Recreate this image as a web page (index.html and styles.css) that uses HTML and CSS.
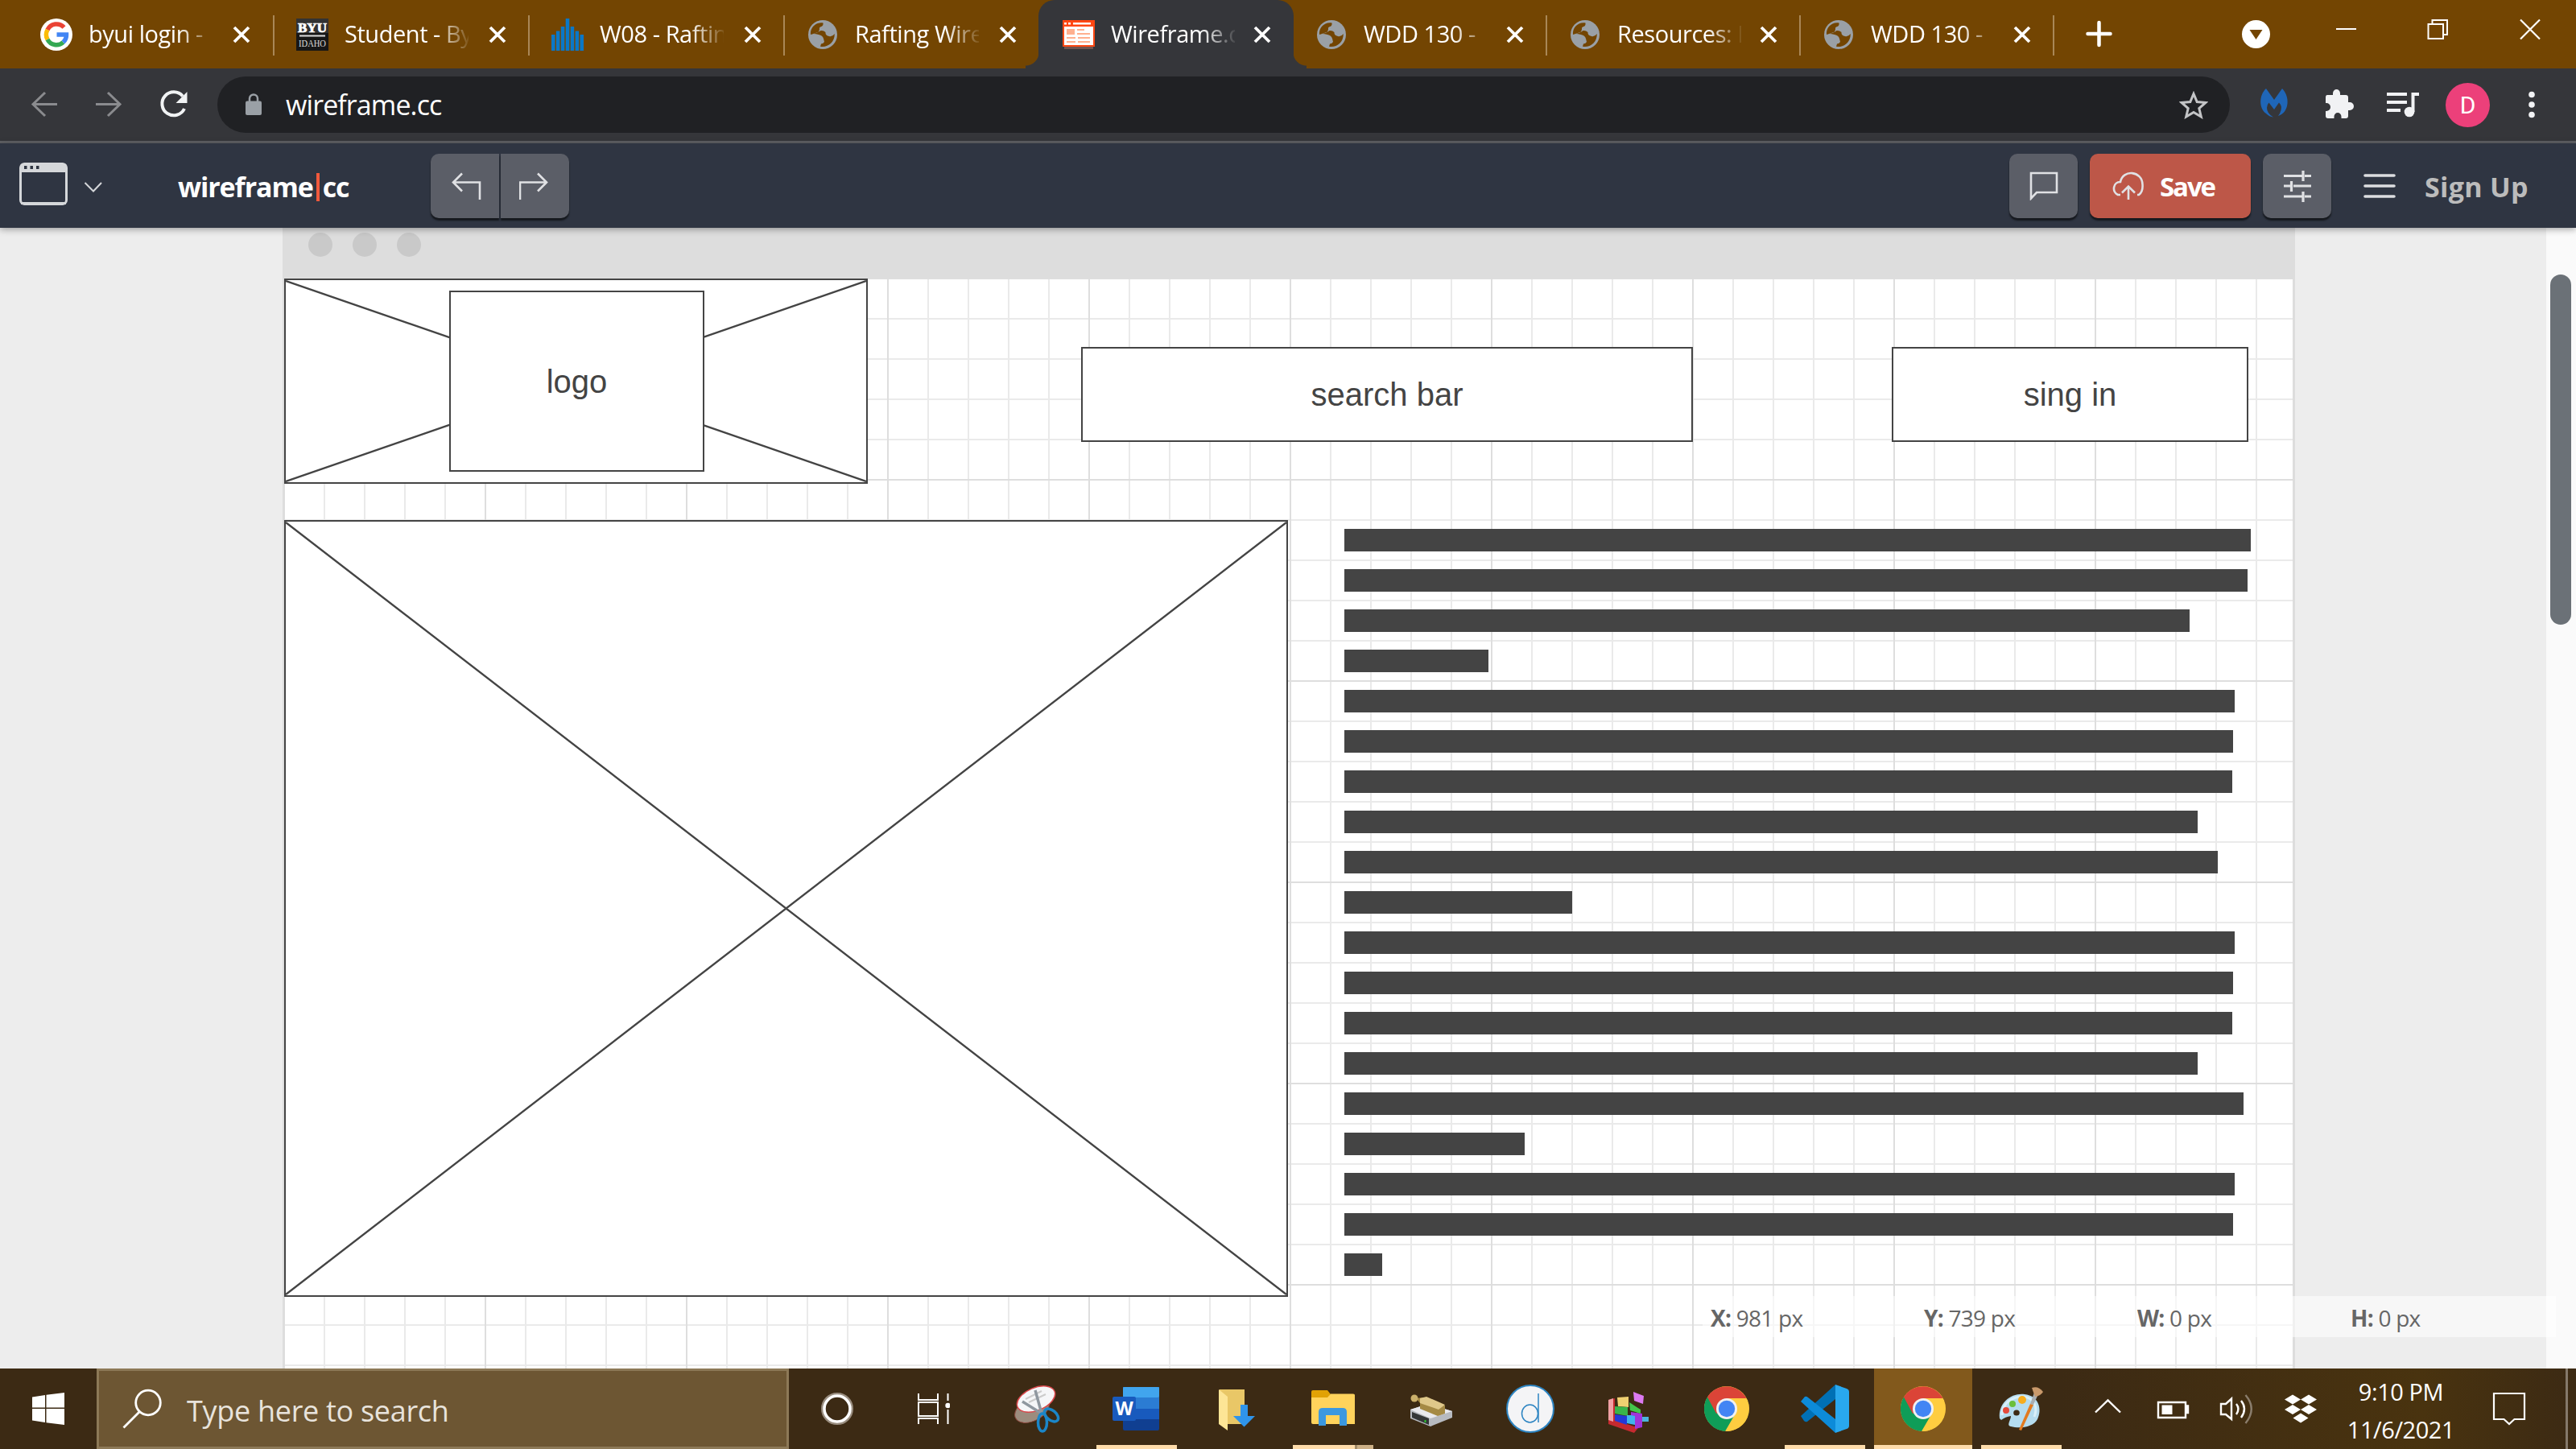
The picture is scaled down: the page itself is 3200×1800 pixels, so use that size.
FILE: index.html
```html
<!DOCTYPE html>
<html lang="en">
<head>
<meta charset="utf-8">
<title>Wireframe.cc</title>
<link rel="stylesheet" href="styles.css">
</head>
<body>
<svg class="sprite" aria-hidden="true">
  <symbol id="globe" viewBox="0 0 36 36">
    <circle cx="18" cy="18" r="18" fill="#9aa0a6"/>
    <path d="M18.500 3.500 C19 7 17 8 15 8.500 Q13.500 9 14 11.500 L13 14.500 Q10 15.500 6 17 L3 18 C2 10 9 2 18.500 3.500Z" fill="#734502"/>
    <path d="M3.500 17.500 Q7 16.500 13 18 Q18 19 19 23 L20 27 Q19 29 16 29.500 L15 32.800 C24 34.500 33 28 32.800 17 Q30 21 26 20 Q21 19 21.500 15 Q19 12.500 15.500 13 Q12 16 3.500 17.500Z" fill="#734502"/>
    <path d="M3 19 H13 Q17.500 19.500 17.500 24 L12.500 24.500 L12.500 31 Q4 28 3 19Z" fill="#9aa0a6"/>
  </symbol>
  <symbol id="x" viewBox="0 0 22 22"><path d="M2 2 L20 20 M20 2 L2 20" stroke="#fff" stroke-width="3.800" fill="none"/></symbol>
  <symbol id="chrome" viewBox="0 0 56 56">
    <circle cx="28" cy="28" r="28" fill="#ffcd40"/>
    <path d="M28 28 L4 13.500 A28 28 0 0 0 26 56 L40 32Z" fill="#0f9d58"/>
    <path d="M28 28 L15 34 L4 13.500 A28 28 0 0 1 52.500 15 L28 15Z" fill="#db4437"/>
    <path d="M28 15.500 H52.500 A28 28 0 0 1 27 56 L39 34Z" fill="#ffcd40"/>
    <circle cx="28" cy="28" r="13" fill="#f1f1f1"/><circle cx="28" cy="28" r="10.200" fill="#4285f4"/>
  </symbol>
</svg>

<header class="tabs">
  <div class="tab">
    <svg class="fav" viewBox="0 0 40 40"><circle cx="20" cy="20" r="20" fill="#fff"/><g fill="none" stroke-width="5.500"><path d="M29.500 11 A12.500 12.500 0 0 0 9 14" stroke="#ea4335"/><path d="M9 14 A12.500 12.500 0 0 0 9 26" stroke="#fbbc05"/><path d="M9 26 A12.500 12.500 0 0 0 28.500 29.500" stroke="#34a853"/><path d="M28.500 29.500 A12.500 12.500 0 0 0 32.500 20 H20.500" stroke="#4285f4"/></g></svg>
    <span class="title">byui login -</span><svg class="close"><use href="#x"/></svg>
  </div>
  <div class="tab">
    <svg class="fav" viewBox="0 0 40 40"><rect width="40" height="40" fill="#171717"/><rect width="40" height="18" fill="#333"/><text x="2" y="17" class="byu" textLength="36" lengthAdjust="spacingAndGlyphs">BYU</text><rect x="4" y="20.500" width="32" height="2" fill="#ddd"/><text x="3" y="35" class="idaho" textLength="34" lengthAdjust="spacingAndGlyphs">IDAHO</text></svg>
    <span class="title">Student - By</span><svg class="close"><use href="#x"/></svg>
  </div>
  <div class="tab">
    <svg class="fav" viewBox="0 0 40 40" fill="#0a78c8"><path d="M0 20h4.500v20H0zM5.900 15.500h4.500V40H5.900zM11.800 10h4.500v30h-4.500zM17.700 0h4.600v40h-4.600zM23.700 10h4.500v30h-4.500zM29.600 15.500h4.500V40h-4.500zM35.500 20H40v20h-4.500z"/></svg>
    <span class="title">W08 - Raftin</span><svg class="close"><use href="#x"/></svg>
  </div>
  <div class="tab"><svg class="fav world"><use href="#globe"/></svg><span class="title">Rafting Wire</span><svg class="close"><use href="#x"/></svg></div>
  <div class="tab active">
    <svg class="fav" viewBox="0 0 40 40"><rect x="2" y="34" width="36" height="4" fill="#70544f"/><rect y="2" width="40" height="33" fill="#ff4713"/><rect x="2" y="10" width="36" height="23" fill="#fff"/><path d="M2 5h3v2.500H2zM7 5h3v2.500H7zM13 5h22v2.500H13z" fill="#fff"/><path d="M5 13h10v7H5zM18 13h9v2H18zM18 18h16v2H18zM5 23h11v2H5zM19 23h15v2H19zM5 28h11v2H5zM19 28h15v2H19z" fill="#ffb08f"/></svg>
    <span class="title">Wireframe.c</span><svg class="close"><use href="#x"/></svg>
  </div>
  <div class="tab"><svg class="fav world"><use href="#globe"/></svg><span class="title">WDD 130 -</span><svg class="close"><use href="#x"/></svg></div>
  <div class="tab"><svg class="fav world"><use href="#globe"/></svg><span class="title">Resources: D</span><svg class="close"><use href="#x"/></svg></div>
  <div class="tab"><svg class="fav world"><use href="#globe"/></svg><span class="title">WDD 130 -</span><svg class="close"><use href="#x"/></svg></div>
  <svg class="winctl" viewBox="0 0 648 84" fill="none" stroke="#fff">
    <path d="M41.500 42 H69.500 M55.500 28 V56" stroke-width="4.500" stroke-linecap="round"/>
    <circle cx="250.500" cy="42.500" r="17.500" fill="#fff" stroke="none"/><path d="M242.500 37 H258.500 L250.500 49Z" fill="#734502" stroke="none"/>
    <path d="M350 36 H375" stroke-width="2"/>
    <path d="M464.500 30 H483 V48 H464.500Z M469.500 30 V25 H488 V43 H483" stroke-width="2"/>
    <path d="M579 24.500 L603 48.500 M603 24.500 L579 48.500" stroke-width="2.200"/>
  </svg>
</header>

<nav class="toolbar">
  <svg class="navicons" viewBox="0 0 270 90" fill="none" stroke="#8a8b8e" stroke-width="3">
    <path d="M71 44.500 H41 M56 30 L41 44.500 L56 59"/>
    <path d="M119 44.500 H149 M134 30 L149 44.500 L134 59"/>
    <path d="M229 50 A14.500 14.500 0 1 1 227 34.500" stroke="#f1f3f4" stroke-width="4"/><path d="M232.500 29 V43 H218.500Z" fill="#f1f3f4" stroke="none"/>
  </svg>
  <div class="omnibox">
    <svg class="lock" viewBox="0 0 20 28"><rect y="9.500" width="20" height="17.500" rx="2" fill="#9aa0a6"/><path d="M5 11 V6.500 A5 5 0 0 1 15 6.500 V11" fill="none" stroke="#9aa0a6" stroke-width="2.500"/></svg>
    <span class="url">wireframe.cc</span>
    <svg class="star" viewBox="0 0 36 35"><path d="M18 3.500 L22.200 13.500 L33 14.400 L24.800 21.500 L27.300 32 L18 26.400 L8.700 32 L11.200 21.500 L3 14.400 L13.800 13.500Z" fill="none" stroke="#c3c4c6" stroke-width="3"/></svg>
  </div>
  <svg class="ext" viewBox="0 0 430 90">
    <path d="M45 25 C36 33 36 50 45 56 Q49 60 54 60.500 Q46 56 46 49 Q46 45 48.500 42.500 L55 51 L61 42.500 Q65 46 63.500 52 Q62.500 56 60 59 C74 55 75 35 65 25 L55 39Z" fill="#1f66b8"/>
    <path d="M121 33 H128 V31 A4.500 5 0 0 1 137 31 V33 H144 Q147 33 147 36 V42 H149 A5 5 0 0 1 149 52 H147 V59 Q147 62 144 62 H138.500 V60 A4.500 5 0 0 0 129.500 60 V62 H122 Q119 62 119 59 V53 H120 A5 5 0 0 0 120 43 H119 V36 Q119 33 121 33Z" fill="#f1f2f4"/>
    <path d="M195 32 H220 M195 42 H220 M195 52 H212" stroke="#f1f2f4" stroke-width="4"/><path d="M227.500 54 V32 H235" stroke="#f1f2f4" stroke-width="4" fill="none"/><circle cx="223" cy="54" r="6.300" fill="#f1f2f4"/>
    <circle cx="295.500" cy="45.500" r="27.500" fill="#ec407a"/><text x="295.500" y="56" class="avatar">D</text>
    <g fill="#f1f2f4"><circle cx="375" cy="32.500" r="3.800"/><circle cx="375" cy="45" r="3.800"/><circle cx="375" cy="57.500" r="3.800"/></g>
  </svg>
</nav>

<div class="appbar">
  <svg class="windowicon" viewBox="0 0 104 56"><rect x="1.500" y="1.500" width="57" height="50" rx="5" fill="none" stroke="#d5d7da" stroke-width="3"/><path d="M1 12 V5 Q1 1 5 1 H55 Q59 1 59 5 V12Z" fill="#d5d7da"/><path d="M2 50.500H58" stroke="#d5d7da" stroke-width="3"/><path d="M6 4h3.500v4H6zM13.500 4H17v4h-3.500zM21 4h3.500v4H21z" fill="#2f3542"/><path d="M81.500 25 L92 35.500 L102 25" fill="none" stroke="#d5d7da" stroke-width="2"/></svg>
  <div class="brand">wireframe<i></i>cc</div>
  <div class="history">
    <div class="btn"><svg viewBox="0 0 40 34"><path d="M38 34 V12.500 H6 M16 1.500 L5 12.500 L16 23.500" class="line"/></svg></div>
    <div class="btn"><svg viewBox="0 0 40 34"><path d="M1 34 V12.500 H33 M23 1.500 L34 12.500 L23 23.500" class="line"/></svg></div>
  </div>
  <div class="btn comment"><svg viewBox="0 0 36 36"><path d="M2 2 H34 V26 H9 L2 33.500Z" class="line"/></svg></div>
  <div class="btn save"><svg viewBox="0 0 40 36"><path d="M10 29 H7 C-1 25 1 13 10 13 C13 -3 37 -1 37.500 16 C38 22 37 26 33 29 H31 M20 35 V19 M12 26.500 L20 18.500 L28 26.500" class="line"/></svg><span>Save</span></div>
  <div class="btn tune"><svg viewBox="0 0 36 40"><path d="M1 7.500 H25 M27 7.500 H35 M25 1 V14 M1 20 H9 M13 20 H35 M10.500 14 V27 M1 33 H25 M27 33 H35 M25 27 V40" class="line thick"/></svg></div>
  <svg class="menu" viewBox="0 0 40 36"><path d="M2 5 H38 M2 18 H38 M2 31 H38" stroke="#dcdde0" stroke-width="3.600" stroke-linecap="round"/></svg>
  <span class="signup">Sign Up</span>
</div>

<main class="workspace">
  <div class="frame">
    <div class="framebar"><b></b><b></b><b></b></div>
    <div class="page">
      <div class="top">
        <div class="box image logo"><svg viewBox="0 0 721 251" preserveAspectRatio="none"><path d="M0 1 L721 250 M721 1 L0 250"/></svg><div class="box label">logo</div></div>
        <div class="box search">search bar</div>
        <div class="box signin">sing in</div>
      </div>
      <div class="content">
        <div class="box image hero"><svg viewBox="0 0 1243 961" preserveAspectRatio="none"><path d="M0 1 L1243 960 M1243 1 L0 960"/></svg></div>
        <div class="copy">
          <p style="width:1126px"></p><p style="width:1122px"></p><p style="width:1050px"></p><p style="width:179px"></p>
          <p style="width:1106px"></p><p style="width:1104px"></p><p style="width:1103px"></p><p style="width:1060px"></p><p style="width:1085px"></p><p style="width:283px"></p>
          <p style="width:1106px"></p><p style="width:1104px"></p><p style="width:1103px"></p><p style="width:1060px"></p><p style="width:1117px"></p><p style="width:224px"></p>
          <p style="width:1106px"></p><p style="width:1104px"></p><p style="width:47px"></p>
        </div>
      </div>
    </div>
  </div>
  <div class="scroll"><div class="thumb"></div></div>
  <div class="status"><span><b>X:</b> 981 px</span><span><b>Y:</b> 739 px</span><span><b>W:</b> 0 px</span><span><b>H:</b> 0 px</span></div>
</main>

<footer class="taskbar">
  <div class="start"><svg viewBox="0 0 40 40" fill="#fff"><path d="M0 5.500 L16 3 V18.500 H0ZM17.500 2.800 L40 0 V18.500 H17.500ZM0 20 H16 V37 L0 34.500ZM17.500 20 H40 V40 L17.500 37.200Z"/></svg></div>
  <div class="find"><svg viewBox="0 0 50 50" fill="none" stroke="#fff" stroke-width="2.800"><circle cx="32" cy="17.500" r="15.300"/><path d="M21.500 28.500 L1.500 48.500"/></svg><span>Type here to search</span></div>
  <div class="sys"><svg viewBox="0 0 40 40"><circle cx="20" cy="20" r="18" fill="none" stroke="#9a8e80" stroke-width="4"/><circle cx="20" cy="20" r="16" fill="none" stroke="#fff" stroke-width="3.500"/></svg></div>
  <div class="sys"><svg viewBox="0 0 40 40" fill="none" stroke="#fff" stroke-width="2"><path d="M1 1 V9 H25 V1 M1 12 H25 V29 H1Z M1 39 V32 H25 V39 M37.500 1 V10 M37.500 21 V39"/><circle cx="37.500" cy="16" r="3.200" fill="#fff" stroke="none"/></svg></div>
  <div class="apps">
    <div class="app"><svg viewBox="0 0 60 60"><ellipse cx="22" cy="31" rx="23" ry="14" transform="rotate(-28 22 31)" fill="#9c8c7e" stroke="#8e4a40" stroke-width="1"/><ellipse cx="27" cy="18" rx="25" ry="14" transform="rotate(-23 27 18)" fill="#f5f6f8" stroke="#d8474a" stroke-width="1.500"/><path d="M14 18 L34 8 M18 22 L39 12" stroke="#ccc" stroke-width="2"/><path d="M10 21 L34 36 M26 7 L34 36" stroke="#8f979f" stroke-width="3.500"/><g fill="none" stroke="#1b86c8" stroke-width="3.500"><ellipse cx="35" cy="47" rx="5.500" ry="11"/><ellipse cx="46" cy="38" rx="6" ry="10" transform="rotate(-50 46 38)"/></g></svg></div>
    <div class="app run"><svg viewBox="1 0 60 60"><rect x="14" y="3" width="45" height="54" rx="2" fill="#103f91"/><rect x="14" y="3" width="45" height="40" fill="#185abd"/><rect x="14" y="3" width="45" height="27" fill="#2b7cd3"/><rect x="14" y="3" width="45" height="13" rx="2" fill="#41a5ee"/><rect x="1" y="15" width="29" height="30" rx="2" fill="#185abd"/><text x="15.500" y="38" class="word">W</text></svg></div>
    <div class="app"><svg viewBox="0 0 60 60"><path d="M11 6 H42 V49 H11Z" fill="#e9c767"/><path d="M10 6 L21 15 V57 L10 49Z" fill="#fde596"/><path d="M37 25 H46 V39 H55 L41.500 52.500 L28 39 H37Z" fill="#2f94ea"/></svg></div>
    <div class="app run group"><svg viewBox="0 0 60 60"><path d="M3 9 Q3 7 5 7 H23 L27 12 L23 17 H3Z" fill="#e1a205"/><path d="M3 16 H23 L27 11.500 H55 Q57 11.500 57 13 V49 H5 Q3 49 3 47Z" fill="#ffd35c"/><path d="M12 51 V34 Q12 29 17 29 H42 Q47 29 47 34 V51 H38 V38 H21 V51Z" fill="#3b98e0"/></svg></div>
    <div class="app"><svg viewBox="0 0 60 60"><path d="M4 31 L26 24 L56 33 V41 L29 52 L4 42Z" fill="#b7bac0"/><path d="M4 31 L26 24 L56 33 L29 42Z" fill="#e9e9ee"/><path d="M6 34 L27 42 V50 L6 41Z" fill="#343638"/><path d="M11 17 L20 16 L47 26 V36 L38 39 L16 30 V23Z" fill="#a58a45"/><path d="M16 17 L24 15 L47 25 L39 31 L16 23Z" fill="#dfc88a"/><circle cx="9" cy="17" r="4.500" fill="#cbb06b"/><path d="M22.500 44v3" stroke="#2dc52d" stroke-width="2"/></svg></div>
    <div class="app"><svg viewBox="0 0 60 60"><circle cx="30" cy="30" r="29" fill="#f4f4f6" stroke="#2c84c2" stroke-width="2"/><g fill="none" stroke="#2c84c2" stroke-width="1.500"><ellipse cx="29.500" cy="36" rx="10" ry="11"/><path d="M40 11 V47"/></g></svg></div>
    <div class="app"><svg viewBox="-1 0 60 60"><path d="M4 19 L12 17 V44 L36 52 L44 50 L36 60 L4 49Z" fill="#c62a30"/><path d="M4 19 L10 17 V46 L4 44Z" fill="#f0a0a4"/><path d="M15 16 L29 15 V28 L16 27Z" fill="#efd071"/><path d="M12 27 L28 28 V39 L12 36Z" fill="#39b44a"/><path d="M12 37 L27 39 V50 L12 45Z" fill="#2438d8"/><path d="M27 38 H37 V50 L27 48Z" fill="#3fb3ee"/><path d="M32 34 L46 36 V53 L37 55 V39 L32 38Z" fill="#a034d8"/><path d="M30 22 L44 31 V36 L31 32Z" fill="#43c64b"/><path d="M35 9 L48 14 L47 24 L36 20Z" fill="#dc7af2"/><rect x="46" y="40" width="8" height="6" fill="#4bb4dc"/></svg></div>
    <div class="app"><svg class="chr"><use href="#chrome"/></svg></div>
    <div class="app run"><svg viewBox="0 0 60 60"><path d="M0 39 L43 0 V18 L8 46 Q6 47 4 45Z" fill="#0070b5"/><path d="M0 21 L5 15 Q7 14 9 16 L43 43 V60Z" fill="#0d8bd9"/><path d="M43 0 L57 5 Q60 6 60 9 V51 Q60 54 57 55 L43 60Z" fill="#29a8ee"/></svg></div>
    <div class="app run current"><svg class="chr"><use href="#chrome"/></svg></div>
    <div class="app run"><svg viewBox="0 0 60 60"><path d="M3 42 C1 22 18 10 34 12 C52 14 56 31 50 43 C45 53 28 55 17 52 C11 51 17 44 17 39 Q10 40 5 44Z" fill="#b5dcef"/><path d="M6 38 C6 24 18 14 33 15 C48 17 50 30 46 40" fill="none" stroke="#d9eff9" stroke-width="3"/><ellipse cx="24" cy="35" rx="3.800" ry="3.500" fill="#3c2a14"/><circle cx="11" cy="32" r="4" fill="#e44a3b"/><circle cx="19" cy="24" r="4" fill="#6bbf3b"/><circle cx="31" cy="19" r="5" fill="#f7ad1d"/><path d="M41 24 L45 25 L30 57 L27 56Z" fill="#e27a1f"/><path d="M41 24 L46 10 L51 12 L45 25Z" fill="#a9aeb2"/><path d="M43 4 Q51 1 57 9 Q54 14 47 15Z" fill="#c9996b"/></svg></div>
  </div>
  <svg class="tray" viewBox="0 0 340 100" fill="none" stroke="#fff" stroke-width="2.400">
    <path d="M34 54.500 L49.500 39.500 L65 54.500"/>
    <path d="M112 42 H146 V61 H112Z M147 46.500 H149 V55 H147Z" /><rect x="116.500" y="45.500" width="13" height="11.500" fill="#fff" stroke="none"/>
    <path d="M190 44 H196 L203 37.500 V63 L196 57 H190Z"/><path d="M209 44 Q214 50 209 57 M215 40 Q223 50 215 61"/><path d="M220.500 33 Q235 50 220.500 68" stroke="#8a7d6c"/>
    <path d="M279 32.500 L289 38.500 L279 44.500 L269 38.500ZM299 32.500 L309 38.500 L299 44.500 L289 38.500ZM279 45 L289 51 L279 57 L269 51ZM299 45 L309 51 L299 57 L289 51ZM289 55.500 L298.500 61.500 L289 67.500 L279.500 61.500Z" fill="#fff" stroke="none"/>
  </svg>
  <div class="clock"><span>9:10 PM</span><span>11/6/2021</span></div>
  <svg class="note" viewBox="0 0 130 100"><path d="M28 31 H66 V63 H53.500 L47 69 L40.500 63 H28Z" fill="none" stroke="#fff" stroke-width="2.200"/><rect x="117" width="3" height="100" fill="#85796a"/></svg>
</footer>
</body>
</html>
```
FILE: styles.css
```css
* { box-sizing: border-box; }
body { margin: 0; width: 3200px; height: 1800px; overflow: hidden; display: flex; flex-direction: column; background: #ededed; font-family: "Open Sans", "Noto Sans", sans-serif; }
svg { display: block; flex: none; }
.sprite { position: absolute; width: 0; height: 0; }

/* Tab strip */
.tabs { flex: none; height: 85px; background: #734502; display: grid; grid-template-columns: 317px 317px 317px 317px 315px 315px 315px 315px 648px; padding-left: 24px; }
.tab { position: relative; display: flex; align-items: center; padding-left: 27px; }
.tab:first-child { padding-left: 26px; }
.tab::after { content: ""; position: absolute; right: 0; top: 19px; width: 2px; height: 50px; background: #a98757; }
.tab:nth-child(4)::after, .tab.active::after { display: none; }
.fav { width: 40px; height: 40px; }
.world { width: 36px; height: 36px; margin: 0 2px 0 2px; }
.title { width: 154px; margin-left: 20px; font-size: 29px; line-height: 44px; letter-spacing: -.45px; color: #fff; white-space: nowrap; overflow: hidden; padding-bottom: 1px; -webkit-mask-image: linear-gradient(90deg, #000 112px, transparent 158px); mask-image: linear-gradient(90deg, #000 112px, transparent 158px); }
.close { width: 22px; height: 22px; margin-left: 25px; }
.tab:nth-child(n+5) .close { margin-left: 23px; }
.tab.active { background: #35363a; border-radius: 20px 20px 0 0; margin-left: -2px; padding-left: 30px; }
.tab.active::before { content: ""; position: absolute; left: -16px; right: -16px; bottom: 0; height: 20px; background: radial-gradient(circle at 0 0, transparent 16px, #35363a 17px) 0 0 / 16px 20px no-repeat, radial-gradient(circle at 100% 0, transparent 16px, #35363a 17px) 100% 0 / 16px 20px no-repeat; }
.byu { font: bold 16px "Liberation Serif", serif; fill: #fff; stroke: #fff; stroke-width: .7px; }
.idaho { font: 12px "Liberation Serif", serif; fill: #ddd; }
.winctl { width: 648px; height: 84px; }

/* Address bar */
.toolbar { flex: none; height: 93px; background: #35363a; border-bottom: 3px solid #5f6064; display: flex; }
.navicons { width: 270px; height: 90px; }
.omnibox { width: 2500px; height: 70px; margin-top: 10px; border-radius: 35px; background: #202124; display: flex; align-items: center; padding: 0 27px 0 35px; }
.lock { width: 20px; height: 28px; }
.url { flex: 1; margin-left: 30px; font-size: 34px; line-height: 50px; letter-spacing: -0.9px; color: #fff; }
.star { width: 36px; height: 35px; }
.ext { width: 430px; height: 90px; }
.avatar { font: 30px Roboto, sans-serif; fill: #fff; text-anchor: middle; }

/* Application bar */
.appbar { flex: none; position: relative; z-index: 2; height: 105px; background: #2f3542; box-shadow: 0 2px 8px rgba(0,0,0,.35); display: flex; align-items: flex-start; padding: 13px 0 0 24px; }
.windowicon { width: 104px; height: 56px; margin-top: 11px; }
.brand { width: 314px; margin-left: 93px; height: 80px; display: flex; align-items: center; padding-top: 1px; font-weight: 700; font-size: 34px; letter-spacing: -1.1px; color: #fff; }
.brand i { width: 4px; height: 35px; margin: 2px 4px 0 4px; background: #f2593c; }
.history { display: flex; gap: 2px; width: 1961px; }
.btn { height: 80px; width: 85px; border-radius: 10px; background: #5b5e67; box-shadow: 0 3px 2px #15181d; display: flex; align-items: center; justify-content: center; }
.history .btn:first-child { border-radius: 10px 0 0 10px; }
.history .btn:last-child { border-radius: 0 10px 10px 0; }
.btn svg { width: 36px; height: 36px; }
.history svg { width: 40px; height: 34px; }
.line { fill: none; stroke: #e0e1e4; stroke-width: 2.6; }
.thick { stroke-width: 3.2; }
.save { width: 200px; margin: 0 15px; background: #bd5748; justify-content: flex-start; padding-left: 28px; color: #fff; font-weight: 700; font-size: 33px; letter-spacing: -2.1px; }
.btn.save svg { width: 40px; }
.save span { margin-left: 19px; }
.btn.tune svg { height: 40px; }
.menu { width: 40px; height: 36px; margin: 22px 0 0 40px; }
.signup { margin-left: 36px; line-height: 83px; font-weight: 700; font-size: 34px; letter-spacing: .3px; color: #bcbcbc; }

/* Workspace */
.workspace { flex: none; position: relative; height: 1417px; overflow: hidden; display: flex; justify-content: space-between; padding-left: 351px; }
.frame { width: 2500px; background: #ddd; border-left: 2px solid #ddd; border-right: 3px solid #ddd; }
.framebar { height: 63px; display: flex; gap: 25px; padding: 6px 0 0 30px; }
.framebar b { width: 30px; height: 30px; border-radius: 50%; background: #c9c9c9; }
.page { height: 1354px; background-color: #fff;
  background-image: linear-gradient(90deg, transparent 248px, #dedede 248px), linear-gradient(transparent 248px, #dedede 248px), linear-gradient(90deg, transparent 48px, #eaeaea 48px), linear-gradient(transparent 48px, #eaeaea 48px);
  background-size: 250px 250px, 250px 250px, 50px 50px, 50px 50px;
  background-position: 1px 1px; }
.box { border: 2px solid #444; background: #fff; display: flex; align-items: center; justify-content: center; font: 40px "Liberation Sans", Arial, sans-serif; color: #444; }
.top { display: flex; align-items: center; height: 255px; }
.image { display: grid; }
.image > * { grid-area: 1 / 1; }
.image svg { width: 100%; height: 100%; fill: none; stroke: #444; stroke-width: 2.4; }
.logo { width: 725px; height: 255px; }
.label { width: 317px; height: 225px; place-self: center; margin-left: 2px; padding-top: 2px; }
.search { width: 760px; height: 118px; margin: 33px 0 0 265px; }
.signin { width: 443px; height: 118px; margin: 33px 0 0 247px; }
.content { display: flex; margin-top: 45px; }
.hero { width: 1247px; height: 965px; }
.copy { padding: 11px 0 0 70px; display: flex; flex-direction: column; gap: 22px; }
.copy p { margin: 0; height: 28px; background: #444; }
.scroll { width: 37px; background: #fafafa; padding: 58px 6px 0 5px; }
.thumb { height: 435px; border-radius: 13px; background: #6b7177; }
.status { position: absolute; left: 2115px; top: 1327px; width: 1060px; height: 51px; padding-left: 10px; background: rgba(255,255,255,.55); display: grid; grid-template-columns: repeat(4, 265px); font-size: 28px; line-height: 54px; letter-spacing: -.75px; color: #666; }

/* Taskbar */
.taskbar { flex: none; height: 100px; background: linear-gradient(90deg, #3c2a14 80%, #49330f 94%, #3c2a14); display: flex; }
.start { width: 120px; padding: 30px 40px; }
.start svg { width: 40px; height: 40px; }
.find { width: 860px; background: #6d5633; border: 3px solid #8d7957; display: flex; align-items: center; padding: 0 0 1px 29px; font-size: 36px; letter-spacing: -.3px; color: #e8e3dc; }
.find svg { width: 50px; height: 50px; }
.find span { margin-left: 30px; padding-top: 5px; }
.sys { width: 120px; display: flex; align-items: center; justify-content: center; }
.sys svg { width: 40px; height: 40px; }
.apps { display: grid; grid-template-columns: repeat(11, 122.1px); margin-left: 9px; width: 1343px; }
.app { position: relative; display: flex; align-items: center; justify-content: center; }
.app svg { width: 60px; height: 60px; }
.app .chr { width: 56px; height: 56px; }
.run::after { content: ""; position: absolute; left: 11px; right: 11px; bottom: 0; height: 5px; background: #ffdcaa; }
.group::after { background: linear-gradient(90deg, #ffdcaa 77px, #a38b67 77px 80px, #cdb086 80px); }
.current { background: #82591c; }
.current::after { left: 0; right: 0; }
.word { font: bold 23px "Open Sans", sans-serif; fill: #fff; text-anchor: middle; }
.tray { width: 340px; height: 100px; margin-left: -3px; }
.clock { width: 165px; margin-left: -9px; display: flex; flex-direction: column; align-items: center; padding-top: 5px; font-size: 29px; line-height: 47px; letter-spacing: -.45px; color: #fff; }
.note { width: 130px; height: 100px; margin-left: 5px; }
```
